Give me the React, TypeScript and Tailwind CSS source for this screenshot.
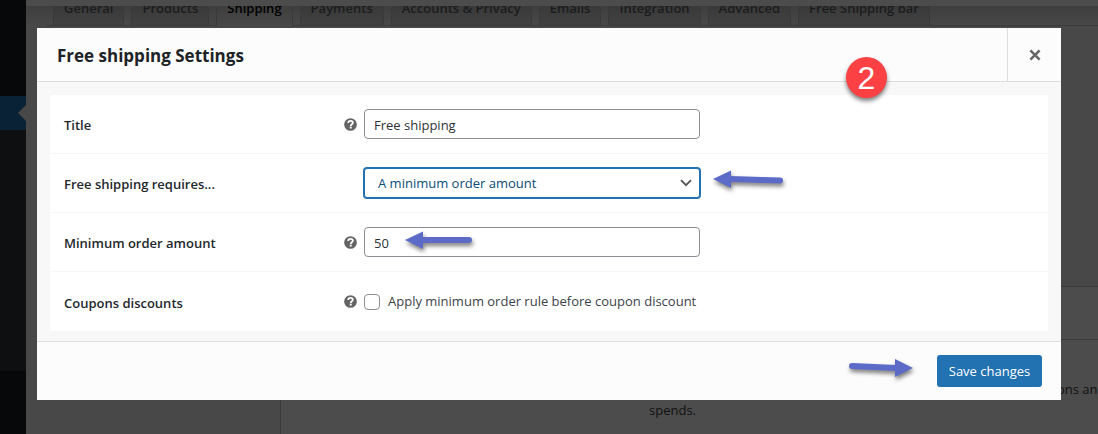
import type { ReactNode } from "react";

const tabs = ["General", "Products", "Shipping", "Payments", "Accounts & Privacy", "Emails", "Integration", "Advanced", "Free Shipping bar"];

function HelpTip() {
  return (
    <svg viewBox="0 0 16 16" className="w-[13px] h-[13px] shrink-0" role="img" aria-label="Help">
      <circle cx="8" cy="8" r="7.8" fill="#646464" />
      <path d="M5.2 6.2C5.2 4.5 6.4 3.6 8.1 3.6S10.9 4.5 10.9 5.9C10.9 7.7 8.3 7.6 8.3 9.7" fill="none" stroke="#fff" strokeWidth="2.2" />
      <rect x="7.1" y="10.7" width="2.4" height="2.2" fill="#fff" />
    </svg>
  );
}

type ArrowProps = { length: number; slope?: number; right?: boolean; className?: string };

function Arrow({ length, slope = 0, right = false, className = "" }: ArrowProps) {
  const tail = length - 3;
  const shaft = right ? `M3 ${9 - slope}L${length - 17} 9` : `M17 9L${tail} ${9 + slope}`;
  const head = right ? `M${length} 9L${length - 18} 0V18Z` : "M0 9L18 0.5V18Z";
  return (
    <svg
      width={length}
      height="18"
      viewBox={`0 0 ${length} 18`}
      className={`overflow-visible pointer-events-none drop-shadow-[1px_3px_2px_rgba(0,0,0,0.5)] ${className}`}
      aria-hidden="true"
    >
      <path d={shaft} stroke="#5c6bc8" strokeWidth="6" strokeLinecap="round" />
      <path d={head} fill="#5c6bc8" />
    </svg>
  );
}

function Row({ label, id, tip = true, children }: { label: string; id: string; tip?: boolean; children: ReactNode }) {
  return (
    <div className="flex items-center h-[59px] px-[14px] border-b border-[#f6f6f6] last:border-b-0">
      <label htmlFor={id} className="w-[280px] shrink-0 pt-1 text-[13px] font-semibold text-[#23282d]">
        {label}
      </label>
      <div className="w-5 shrink-0">{tip && <HelpTip />}</div>
      {children}
    </div>
  );
}

export default function App() {
  return (
    <div className="relative min-h-screen flex overflow-hidden bg-[#484848] font-['Open_Sans','Noto_Sans',sans-serif]">
      <aside className="w-[26px] shrink-0 flex flex-col bg-[#07080a]">
        <div className="h-24" />
        <div className="h-[34px] flex items-center justify-end bg-[#0a2235]">
          <svg viewBox="0 0 8 16" className="w-2 h-4">
            <path d="M8 0 0 8 8 16Z" fill="#484848" />
          </svg>
        </div>
        <div className="h-[241px] bg-[#0e0f11]" />
      </aside>

      <main className="flex-1 min-w-0 flex flex-col">
        <div className="h-1.5 shrink-0 bg-[#4c4c4c]" />
        <div className="shrink-0 pl-5 bg-linear-to-b from-[#3e3e3e] to-[#484848]">
          <nav className="flex h-5 pl-[7px] gap-[7px] border-b border-[#3a3a3a]">
            {tabs.map((tab) => (
              <a
                key={tab}
                href="#"
                className={
                  tab === "Shipping"
                    ? "h-5 px-[10px] border-x border-[#3a3a3a] bg-linear-to-b from-[#3e3e3e] to-[#484848] text-[13px] leading-[5px] font-semibold text-black whitespace-nowrap"
                    : "px-[10px] border-x border-[#3a3a3a] bg-linear-to-b from-[#393939] to-[#424242] text-[13px] leading-[5px] font-semibold text-[#1b1c1d] whitespace-nowrap"
                }
              >
                {tab}
              </a>
            ))}
          </nav>
        </div>
        <div className="h-[260px] shrink-0" />
        <div className="flex-1 ml-[254px] border-t border-l border-[#393939] bg-[#4c4c4c]">
          <div className="h-[53px] border-b border-[#393939]" />
          <p className="pt-[39px] pl-[368px] text-[13px] leading-[21px] text-[#111] whitespace-nowrap">
            <span className="block pl-[408px]">ons and</span>
            spends.
          </p>
        </div>
      </main>
      <div className="absolute top-0 left-[26px] right-0 h-1.5 bg-[#4c4c4c]" />

      <div className="absolute inset-0 pt-7 px-[37px]">
        <section role="dialog" aria-labelledby="dialog-title" className="relative bg-[#f8f8f8]">
          <header className="flex h-[54px] bg-[#fcfcfc] border-b border-[#ddd]">
            <h1 id="dialog-title" className="flex-1 pl-5 text-[17px] leading-[56px] font-bold text-[#1d2327]">
              Free shipping Settings
            </h1>
            <button aria-label="Close" className="w-[54px] flex items-center justify-center border-l border-[#ddd]">
              <svg viewBox="0 0 12 12" className="w-3 h-3">
                <path d="M1.4 1.4 10.6 10.6M10.6 1.4 1.4 10.6" stroke="#666" strokeWidth="2.6" />
              </svg>
            </button>
          </header>

          <form className="mx-[13px] mt-[13px] mb-[10px] bg-white" onSubmit={(e) => e.preventDefault()}>
            <Row label="Title" id="title">
              <input id="title" defaultValue="Free shipping" className="w-[336px] h-[30px] pt-0.5 px-[9px] border border-[#8c8f94] rounded text-[13px] text-[#2c3338] bg-white" />
            </Row>
            <Row label="Free shipping requires..." id="requires" tip={false}>
              <div className="relative flex">
                <select
                  id="requires"
                  className="w-[336px] h-[30px] pt-0.5 pl-[13px] appearance-none border border-[#2271b1] shadow-[0_0_0_1px_#2271b1] rounded-[3px] text-[13px] text-[#0a4b78] bg-white"
                >
                  <option>A minimum order amount</option>
                </select>
                <svg viewBox="0 0 12 8" className="absolute right-2 top-[11px] w-3 h-2 pointer-events-none">
                  <path d="M1 1.2 6 6.2 11 1.2" fill="none" stroke="#555" strokeWidth="1.9" />
                </svg>
                <Arrow length={70} slope={1.5} className="absolute left-[349px] top-[2px]" />
              </div>
            </Row>
            <Row label="Minimum order amount" id="amount">
              <div className="relative flex">
                <input id="amount" defaultValue="50" className="w-[336px] h-[30px] pt-0.5 px-[9px] border border-[#8c8f94] rounded text-[13px] text-[#2c3338] bg-white" />
                <Arrow length={67} className="absolute left-[41px] top-1" />
              </div>
            </Row>
            <Row label="Coupons discounts" id="coupons">
              <label className="flex items-center gap-2 text-[13px] text-[#3c434a]">
                <input id="coupons" type="checkbox" className="appearance-none w-4 h-4 border border-[#8c8f94] rounded bg-white" />
                Apply minimum order rule before coupon discount
              </label>
            </Row>
          </form>

          <footer className="flex items-center justify-end gap-6 h-[59px] pr-[19px] bg-[#fcfcfc] border-t border-[#ddd]">
            <Arrow length={64} slope={2} right className="mb-1.5" />
            <button className="w-[105px] h-8 pt-0.5 rounded-[3px] bg-[#2271b1] text-[13px] text-white">Save changes</button>
          </footer>

          <span className="absolute right-[174px] top-[29px] w-[41px] h-[41px] flex items-center justify-center rounded-full bg-[#fc4144] text-white text-[32px] leading-none font-['Liberation_Sans',sans-serif] shadow-[0_3px_4px_rgba(0,0,0,0.5)]">
            2
          </span>
        </section>
      </div>
    </div>
  );
}
